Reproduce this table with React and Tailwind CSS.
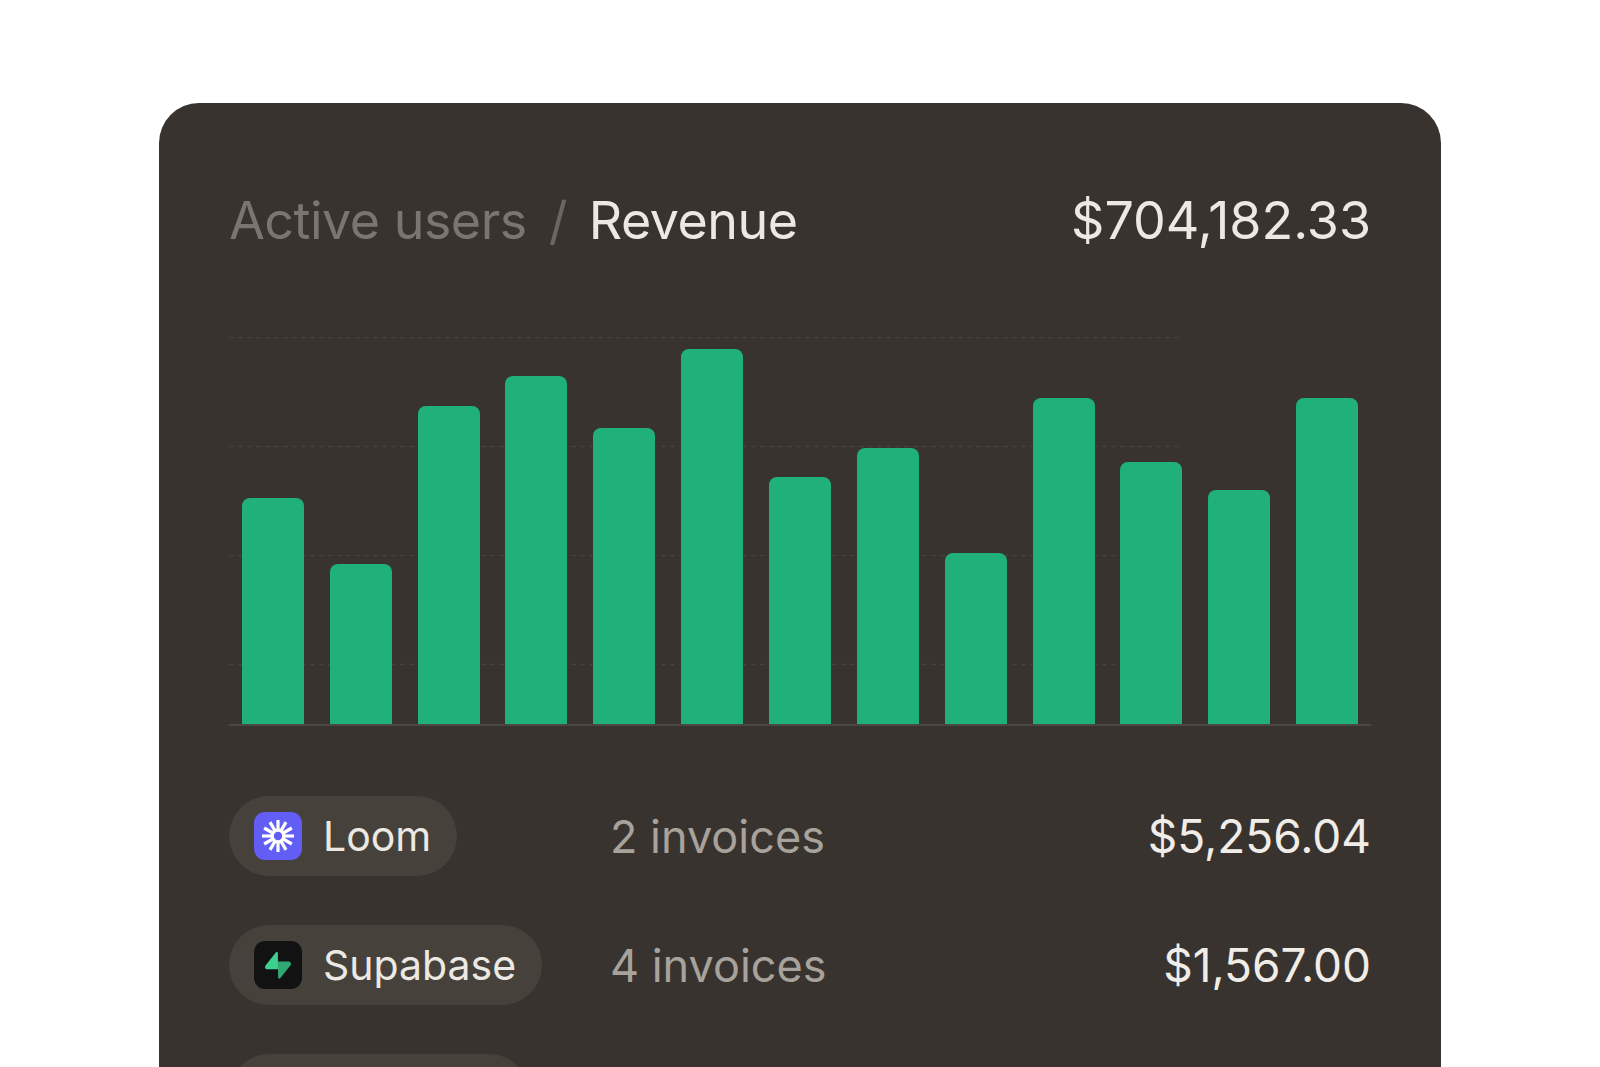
import React from "react";

const bars = [226, 160, 318, 348, 296, 375, 247, 276, 171, 326, 262, 234, 326];

const rows = [
  { name: "Loom", invoices: "2 invoices", amount: "$5,256.04", icon: "loom" },
  { name: "Supabase", invoices: "4 invoices", amount: "$1,567.00", icon: "supabase" },
];

function LoomIcon() {
  const rays = Array.from({ length: 12 }, (_, i) => (i * Math.PI) / 6);
  return (
    <div className="w-[48px] h-[48px] rounded-[11px] bg-[#625df5] flex items-center justify-center shrink-0">
      <svg width="34" height="34" viewBox="0 0 34 34">
        {rays.map((a, i) => (
          <line
            key={i}
            x1={17 + Math.cos(a) * 5}
            y1={17 + Math.sin(a) * 5}
            x2={17 + Math.cos(a) * 16}
            y2={17 + Math.sin(a) * 16}
            stroke="#fff"
            strokeWidth="3.2"
          />
        ))}
        <circle cx="17" cy="17" r="7.5" fill="#fff" />
        <circle cx="17" cy="17" r="4.2" fill="#625df5" />
      </svg>
    </div>
  );
}

function SupabaseIcon() {
  return (
    <div className="w-[48px] h-[48px] rounded-[11px] bg-[#121212] flex items-center justify-center shrink-0">
      <svg width="26" height="27" viewBox="0 0 109 113">
        <path
          d="M63.7076 110.284C60.8481 113.885 55.0502 111.912 54.9813 107.314L53.9738 40.0627L99.1935 40.0627C107.384 40.0627 111.952 49.5228 106.859 55.9374L63.7076 110.284Z"
          fill="#2fa873"
        />
        <path
          d="M45.317 2.07103C48.1765 -1.53037 53.9745 0.442937 54.0434 5.041L54.4849 72.2922H9.83113C1.64038 72.2922 -2.92775 62.8321 2.1655 56.4175L45.317 2.07103Z"
          fill="#3ecf8e"
        />
      </svg>
    </div>
  );
}

export default function App() {
  return (
    <div
      className="h-screen w-full overflow-hidden bg-white pt-[103px]"
      style={{ fontFamily: "Inter, 'Noto Sans', sans-serif" }}
    >
      <div className="mx-auto w-[1282px] rounded-t-[40px] bg-[#38332e] px-[70px] pt-[92px] pb-10">
        {/* Header */}
        <div className="flex items-baseline justify-between text-[52px] leading-none tracking-[-0.01em]">
          <div className="flex items-baseline">
            <span className="text-[#7b7570]">Active users</span>
            <span className="mx-[22px] text-[#6b6660]">/</span>
            <span className="text-[#ece8e3]">Revenue</span>
          </div>
          <span className="text-[#ece8e3] tracking-[0]">$704,182.33</span>
        </div>

        {/* Chart */}
        <div className="relative mt-[90px] h-[390px]">
          <svg className="absolute left-0 top-0" width="952" height="340">
            {[0.5, 109.5, 218.5, 327.5].map((y) => (
              <line key={y} x1="0" x2="952" y1={y} y2={y} stroke="#46413b" strokeWidth="1.5" strokeDasharray="5 4" />
            ))}
          </svg>
          <div className="relative flex h-[389px] items-end border-b-2 border-[#4b4641]">
            {bars.map((h, i) => (
              <div key={i} className="flex flex-1 justify-center">
                <div className="w-[62px] rounded-t-[8px] bg-[#20b17a]" style={{ height: h }} />
              </div>
            ))}
          </div>
        </div>

        {/* Rows */}
        <div className="mt-[69px] flex flex-col gap-[49px]">
          {rows.map((r) => (
            <div key={r.name} className="flex items-center leading-none">
              <div className="w-[381px] shrink-0">
                <div className="inline-flex h-[80px] items-center gap-[21px] rounded-full bg-[#46413b] pl-[25px] pr-[26px] text-[41px] text-[#ece8e3]">
                  {r.icon === "loom" ? <LoomIcon /> : <SupabaseIcon />}
                  <span>{r.name}</span>
                </div>
              </div>
              <span className="text-[45px] text-[#a8a29c]">{r.invoices}</span>
              <span className="ml-auto text-[46px] text-[#f0ece8]">{r.amount}</span>
            </div>
          ))}
          <div className="h-[80px] w-[300px] rounded-full bg-[#46413b]" />
        </div>
      </div>
    </div>
  );
}
